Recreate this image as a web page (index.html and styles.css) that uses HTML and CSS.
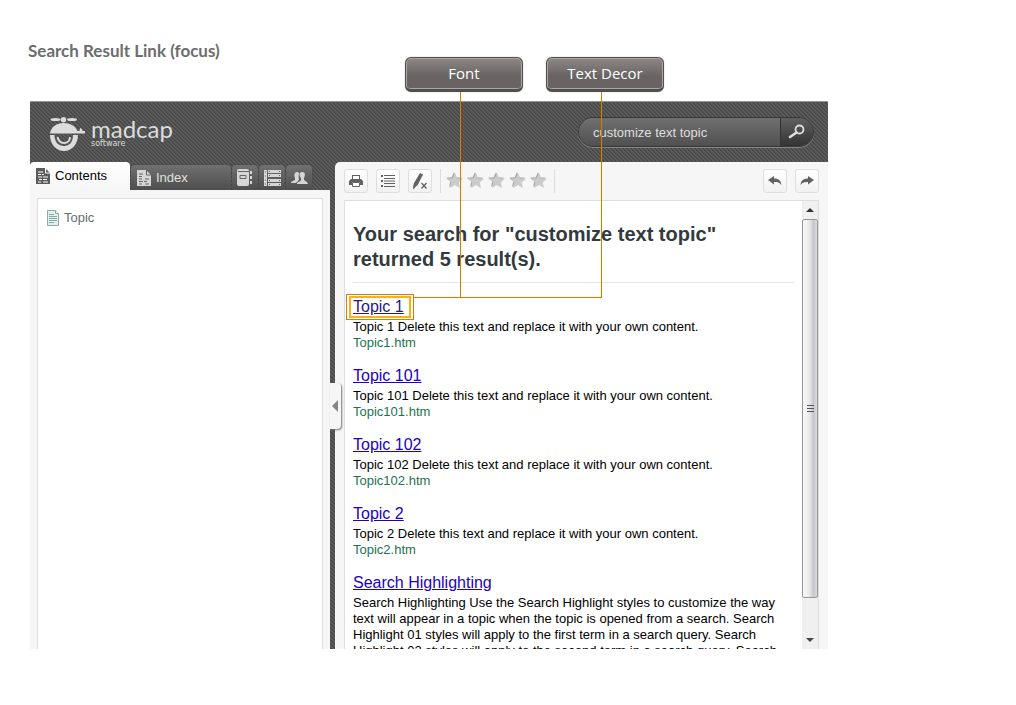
FILE: index.html
```html
<!DOCTYPE html>
<html lang="en">
<head>
<meta charset="utf-8">
<title>Search Result Link (focus)</title>
<link rel="stylesheet" href="styles.css">
</head>
<body>
<h1 class="page-title">Search Result Link (focus)</h1>

<main class="app">
  <header class="app-header">
    <div class="brand">
      <svg class="brand-mark" width="35" height="35" viewBox="0 0 35 35" aria-hidden="true">
        <g fill="#dcdcdc">
          <ellipse cx="5.500" cy="2.500" rx="5" ry="1.500"/><ellipse cx="22" cy="2.500" rx="5" ry="1.500"/>
          <circle cx="13.500" cy="2.700" r="2.700"/>
          <path d="M0 16.500C1 9.500 7 6 13.500 6c7 0 12 3 14 8h2l.5-3 2 1 .5 2H35v2.500z"/>
          <path d="M0 18h4.500c0 7 4 11 9.500 11s9-4 9-11H28c0 9-6 16-14 16S0 27 0 18z"/>
        </g>
        <path d="M7.500 20c1 4.500 4 6 6.500 6 3.500 0 6-2.500 6-6" fill="none" stroke="#dcdcdc" stroke-width="2"/>
      </svg>
      <div class="brand-text"><span class="brand-name">madcap</span><span class="brand-sub">software</span></div>
    </div>
    <form class="search">
      <input class="search-input" type="text" value="customize text topic" aria-label="Search">
      <button class="search-button" type="button" aria-label="Search">
        <svg width="18" height="16" viewBox="0 0 18 16"><circle cx="11.500" cy="5.500" r="4" fill="none" stroke="#dedede" stroke-width="1.800"/><path d="M8.500 8.500L2 13" stroke="#dedede" stroke-width="2.600" stroke-linecap="round"/></svg>
      </button>
    </form>
  </header>

  <div class="workspace">
    <aside class="sidebar">
      <nav class="tabs">
        <button class="tab tab-active" type="button">
          <svg width="14" height="16" viewBox="0 0 14 16"><path d="M0 0h9l5 5v11H0z" fill="#5b5b5b"/><path d="M9.500 0v5H14" fill="none" stroke="#fff"/><path d="M2 4h5M2 6.500h3M6 6.500h2M2 9h4M7 9h5M3 11.500h3M7 11.500h4M2 14h3M7 14h5" stroke="#fff"/></svg>
          Contents</button>
        <button class="tab tab-wide" type="button">
          <svg width="14" height="16" viewBox="0 0 14 16"><path d="M0 0h9l5 5v11H0z" fill="#d6d6d6"/><path d="M9.500 0v5H14" fill="none" stroke="#666"/><path d="M2 4h4M2 6.500h3M2 9h3M8 9h4M2 11.500h4M7 11.500h3M2 14h3M8 14h4" stroke="#666"/></svg>
          Index</button>
        <button class="tab tab-icon" type="button" aria-label="Glossary">
          <svg width="16" height="17" viewBox="0 0 16 17"><rect width="12" height="17" rx="2" fill="#d6d6d6"/><path d="M13 2h2v3h-2zM13 7h2v3h-2zM13 12h2v3h-2z" fill="#d6d6d6"/><path d="M1 2.500h11M3 6.500h6v3H3z" fill="none" stroke="#666"/></svg></button>
        <button class="tab tab-icon" type="button" aria-label="Browse sequences">
          <svg width="17" height="16" viewBox="0 0 17 16"><path d="M0 0h3v16H0zM4 0h13v3H4zM4 4h13v3H4zM4 9h13v3H4zM4 13h13v3H4z" fill="#d6d6d6"/><path d="M1 2h1M1 6h1M1 10h1M1 14h1M5 1.500h1M15 1.500h1M5 5.500h1M15 5.500h1M5 10.500h1M15 10.500h1M5 14.500h1M15 14.500h1" stroke="#666"/></svg></button>
        <button class="tab tab-icon" type="button" aria-label="Community">
          <svg width="17" height="12" viewBox="0 0 17 12" fill="#d6d6d6"><path d="M0 11c0-2 3-2 4-3V6C3 4 3 0 6 0c2 0 2 1 2 2-1 3 0 4 0 6l-3 3z"/><path d="M6 12c0-3 4-2 4-4V6C8 4 8 0 11 0c4 0 3 4 2 6v2c1 1 3 1 4 4z"/></svg></button>
      </nav>
      <div class="sidebar-body">
        <div class="tree">
          <a class="tree-item" href="#">
            <svg width="12" height="16" viewBox="0 0 12 16"><path d="M.5.500h8l3 3v12H.5z" fill="#e3eeee" stroke="#8fa9a8"/><path d="M8.500.500v3h3" fill="#fff" stroke="#8fa9a8"/><path d="M2 4.500h5M2 6.500h8M2 8.500h8M2 10.500h8M2 12.500h5" stroke="#84aaa8"/></svg>
            Topic</a>
        </div>
      </div>
    </aside>

    <section class="viewer">
      <button class="collapse" type="button" aria-label="Hide navigation"><svg width="6" height="12" viewBox="0 0 6 12"><path d="M6 0v12L0 6z" fill="#858585"/></svg></button>
      <div class="toolbar">
        <button class="tool" type="button" aria-label="Print">
          <svg width="14" height="14" viewBox="0 0 14 14"><path d="M3 1h8v4h1l2 2v4h-3V8H3v3H0V7l2-2h1z" fill="#626262"/><path d="M4 2h6v3H4z" fill="#fff"/><path d="M3.500 8.500h7v4h-7z" fill="#fff" stroke="#626262"/></svg></button>
        <button class="tool" type="button" aria-label="Expand all">
          <svg width="14" height="12" viewBox="0 0 14 12"><path d="M0 1h2M0 6h2M0 11h2" stroke="#626262" stroke-width="2"/><path d="M3 .5h11M3 3.500h11M3 6h11M3 8.500h11M3 11.500h11" stroke="#626262"/></svg></button>
        <button class="tool" type="button" aria-label="Remove highlight">
          <svg width="16" height="17" viewBox="0 0 16 17"><path d="M8 0l3 1.500-5 10-3 3-2 2V14l1-4z" fill="#626262"/><path d="M9.500 10l5 5.500M14.500 10l-5 5.500" stroke="#626262" stroke-width="1.300"/></svg></button>
        <div class="rating">
          <svg class="star" viewBox="0 0 16 16"><path d="M8 0l2.300 5.300 5.700.500-4.300 3.700 1.300 5.500-5-2.900L3 15l1.300-5.500L0 5.800l5.700-.5z"/></svg>
          <svg class="star" viewBox="0 0 16 16"><path d="M8 0l2.300 5.300 5.700.500-4.300 3.700 1.300 5.500-5-2.900L3 15l1.300-5.500L0 5.800l5.700-.5z"/></svg>
          <svg class="star" viewBox="0 0 16 16"><path d="M8 0l2.300 5.300 5.700.500-4.300 3.700 1.300 5.500-5-2.900L3 15l1.300-5.500L0 5.800l5.700-.5z"/></svg>
          <svg class="star" viewBox="0 0 16 16"><path d="M8 0l2.300 5.300 5.700.500-4.300 3.700 1.300 5.500-5-2.900L3 15l1.300-5.500L0 5.800l5.700-.5z"/></svg>
          <svg class="star" viewBox="0 0 16 16"><path d="M8 0l2.300 5.300 5.700.500-4.300 3.700 1.300 5.500-5-2.900L3 15l1.300-5.500L0 5.800l5.700-.5z"/></svg>
        </div>
        <div class="history">
          <button class="tool" type="button" aria-label="Back">
            <svg width="14" height="10" viewBox="0 0 14 10"><path d="M0 4l6-4v2.500c5 0 7 2 7.500 7C12 6.500 10 6 6 6v2.500z" fill="#626262"/></svg></button>
          <button class="tool" type="button" aria-label="Forward">
            <svg width="14" height="10" viewBox="0 0 14 10"><path d="M14 4L8 0v2.500c-5 0-7 2-7.500 7C2 6.500 4 6 8 6v2.500z" fill="#626262"/></svg></button>
        </div>
      </div>
      <div class="frame">
        <div class="results">
          <h2 class="results-title">Your search for "customize text topic" returned 5 result(s).</h2>
          <article class="result"><a class="result-link focused" href="#">Topic 1</a><p>Topic 1 Delete this text and replace it with your own content.</p><cite>Topic1.htm</cite></article>
          <article class="result"><a class="result-link" href="#">Topic 101</a><p>Topic 101 Delete this text and replace it with your own content.</p><cite>Topic101.htm</cite></article>
          <article class="result"><a class="result-link" href="#">Topic 102</a><p>Topic 102 Delete this text and replace it with your own content.</p><cite>Topic102.htm</cite></article>
          <article class="result"><a class="result-link" href="#">Topic 2</a><p>Topic 2 Delete this text and replace it with your own content.</p><cite>Topic2.htm</cite></article>
          <article class="result"><a class="result-link" href="#">Search Highlighting</a><p>Search Highlighting Use the Search Highlight styles to customize the way text will appear in a topic when the topic is opened from a search. Search Highlight 01 styles will apply to the first term in a search query. Search Highlight 02 styles will apply to the second term in a search query. Search</p></article>
        </div>
        <div class="scrollbar" aria-hidden="true">
          <svg class="scroll-arrow" width="8" height="4" viewBox="0 0 8 4"><path d="M0 4l4-4 4 4z" fill="#333"/></svg>
          <div class="scroll-track"><div class="scroll-thumb"><svg width="7" height="8" viewBox="0 0 7 8"><path d="M0 .5h7M0 3.500h7M0 6.500h7" stroke="#555"/></svg></div></div>
          <svg class="scroll-arrow" width="8" height="4" viewBox="0 0 8 4"><path d="M0 0l4 4 4-4z" fill="#444"/></svg>
        </div>
      </div>
    </section>
  </div>
</main>

<div class="callout callout-font">Font</div>
<div class="callout callout-decor">Text Decor</div>
<div class="lead lead-font"></div>
<div class="lead lead-decor"></div>
<div class="target"></div>
</body>
</html>
```
FILE: styles.css
```css
* { box-sizing: border-box; }

body {
  position: relative;
  display: flex;
  flex-direction: column;
  height: 100vh;
  margin: 0;
  padding: 40px 188px 56px 30px;
  overflow: hidden;
  background: #fff;
  font: 13px/16px "Liberation Sans", Arial, sans-serif;
}

button { margin: 0; padding: 0; border: 0; font: inherit; }
svg { display: block; flex: none; }

.page-title {
  height: 61px;
  margin: 0 0 0 -2px;
  color: #6d6d6d;
  font: bold 17px/22px Lato, sans-serif;
}

.app {
  display: flex;
  flex: 1;
  flex-direction: column;
  min-height: 0;
  background: #5a5a5a linear-gradient(45deg, #494949 25%, #5d5d5d 25% 50%, #494949 50% 75%, #5d5d5d 75%) 0 0 / 4px 4px;
}

.app-header {
  display: flex;
  flex: none;
  justify-content: space-between;
  height: 61px;
  padding: 15px 14px 0 20px;
  border-top: 1px solid #929692;
}

.brand { display: flex; gap: 6px; color: #dcdcdc; }
.brand-text { display: flex; flex-direction: column; }
.brand-name { font: 24px/23px Lato, sans-serif; }
.brand-sub { font: 8px/8px "DejaVu Sans", sans-serif; }

.search {
  display: flex;
  width: 236px;
  height: 30px;
  overflow: hidden;
  border: 1px solid #383838;
  border-radius: 15px;
  box-shadow: 0 1px 0 #858585;
}

.search-input {
  flex: 1;
  min-width: 0;
  padding: 2px 14px 0;
  border: 0;
  outline: 0;
  background: linear-gradient(#707070, #505050);
  color: #dedede;
  font: inherit;
}

.search-button {
  display: grid;
  place-items: center;
  width: 33px;
  border-left: 1px solid #333;
  background: linear-gradient(#606060, #343434);
}

.workspace { display: flex; flex: 1; gap: 5px; min-height: 0; }
.sidebar { display: flex; flex: none; flex-direction: column; width: 300px; }

.tabs { display: flex; flex: none; align-items: flex-end; gap: 1px; height: 28px; }
.tab {
  display: flex;
  align-items: center;
  gap: 5px;
  height: 25px;
  padding-left: 6px;
  border-radius: 4px 4px 0 0;
  background: linear-gradient(#707070, #4e4e4e);
  box-shadow: 0 0 1px #333;
  color: #e0e0e0;
}
.tab-active {
  width: 100px;
  height: 28px;
  background: linear-gradient(#fff, #f6f6f6);
  box-shadow: none;
  color: #000;
}
.tab-wide { width: 100px; }
.tab-icon { justify-content: center; width: 26px; padding: 0; }

.sidebar-body { display: flex; flex: 1; padding: 8px 7px 0; background: #f6f6f6; }
.tree { flex: 1; padding: 11px 9px; border: 1px solid #dedede; border-bottom: 0; background: #fff; }
.tree-item { display: flex; gap: 5px; color: #6b6b6b; text-decoration: none; }

.viewer {
  position: relative;
  display: flex;
  flex: 1;
  flex-direction: column;
  min-width: 0;
  min-height: 0;
  padding: 0 9px;
  border-radius: 5px 0 0 0;
  background: #f6f6f6;
}

.collapse {
  position: absolute;
  top: 221px;
  left: -5px;
  display: flex;
  align-items: center;
  width: 11px;
  height: 46px;
  padding-left: 2px;
  border-radius: 0 4px 4px 0;
  background: #f6f6f6;
  box-shadow: 1px 1px 2px #777;
}

.toolbar { display: flex; flex: none; align-items: center; gap: 8px; height: 38px; }
.tool {
  display: grid;
  place-items: center;
  width: 24px;
  height: 24px;
  border: 1px solid #dfdfdf;
  border-radius: 3px;
  background: linear-gradient(#fff, #f1f1f1);
}
.rating {
  display: flex;
  align-items: center;
  gap: 5px;
  height: 24px;
  padding: 0 7px 0 6px;
  border: solid #dedede;
  border-width: 0 1px;
}
.star { width: 16px; height: 16px; fill: #cbcbcb; filter: drop-shadow(-1px -1px 0 #a9a9a9); }
.history { display: flex; gap: 8px; margin-left: auto; }

.frame {
  display: flex;
  flex: 1;
  min-height: 0;
  border: 1px solid #dedede;
  border-bottom: 0;
  background: #fff;
}
.results { flex: 1; min-width: 0; padding: 21px 8px 0; overflow: hidden; }
.results-title {
  margin: 0 0 13px;
  padding-bottom: 10px;
  border-bottom: 1px solid #e6e6e6;
  color: #333a3e;
  font: bold 20px/25px "Liberation Sans", Arial, sans-serif;
}
.result { margin-bottom: 14px; }
.result-link { position: relative; display: table; margin-bottom: 1px; color: #2200c1; font-size: 16px; line-height: 22px; }
.result p { margin: 0; color: #000; }
.result cite { display: block; color: #1c7350; font-style: normal; }
.focused { color: #29168a; }
.focused::after {
  content: "";
  position: absolute;
  inset: 0 -7px 0 -4px;
  border: 2px solid #fbb116;
}

.scrollbar {
  display: flex;
  flex-direction: column;
  align-items: center;
  width: 16px;
  background: #f0f0f0;
}
.scroll-arrow { margin: 7px 0; }
.scroll-track { flex: 1; align-self: stretch; }
.scroll-thumb {
  display: grid;
  place-items: center;
  height: 92%;
  border: 1px solid #979797;
  border-radius: 2px;
  background: linear-gradient(90deg, #f5f5f5 20%, #e5e5e7 50%, #c5c6cc 75%, #dcdce0);
}

.callout {
  position: absolute;
  top: 57px;
  width: 118px;
  height: 35px;
  border: 1px solid #514e4e;
  border-bottom-width: 3px;
  border-radius: 6px;
  background: linear-gradient(#8d8886, #696463 60%);
  box-shadow: inset 0 0 0 1px #aaa6a5, 0 0 1px #777;
  color: #fff;
  font: 15px/31px "Open Sans", sans-serif;
  text-align: center;
}
.callout-font { left: 405px; }
.callout-decor { left: 546px; }

.lead { position: absolute; top: 92px; height: 206px; border: 0 solid #d97b00; }
.lead-font { left: 460px; border-left-width: 1px; }
.lead-decor { left: 601px; border-left-width: 1px; }
.lead-decor::after {
  content: "";
  position: absolute;
  right: 0;
  bottom: 0;
  width: 188px;
  border-bottom: 1px solid #d97b00;
}
.target { position: absolute; top: 294px; left: 346px; width: 68px; height: 26px; border: 1px solid #d97b00; }
```
